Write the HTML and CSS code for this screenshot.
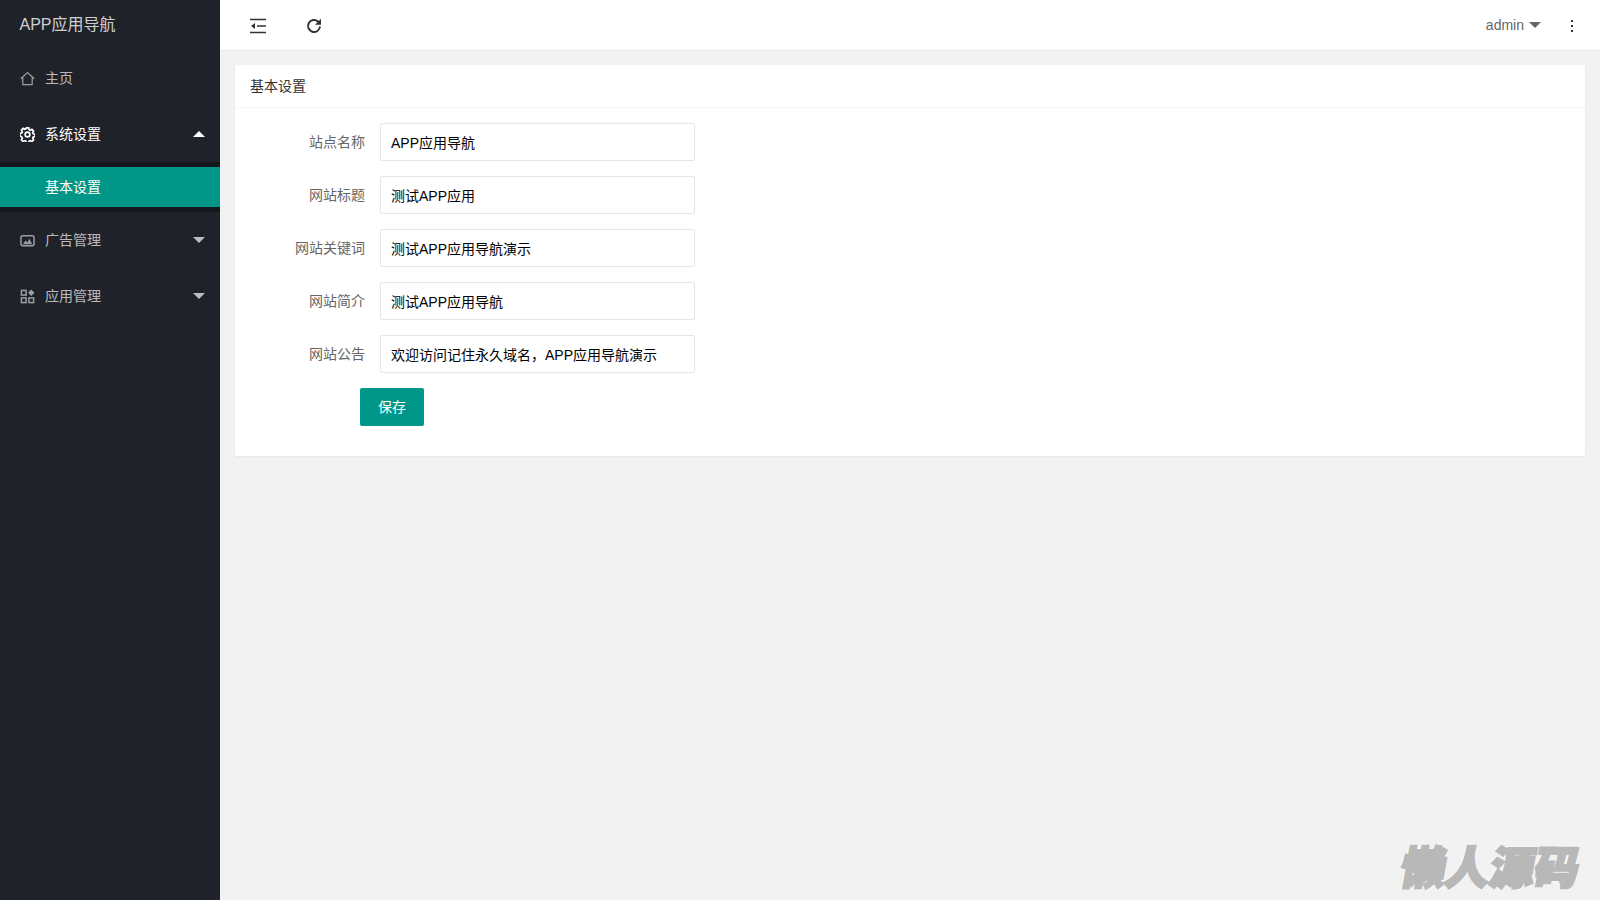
FILE: index.html
```html
<!DOCTYPE html>
<html lang="zh-CN">
<head>
<meta charset="utf-8">
<title>APP应用导航</title>
<link rel="stylesheet" href="styles.css">
</head>
<body>
<div class="app">
  <aside class="side">
    <div class="logo">APP应用导航</div>
    <nav class="menu">
      <a class="item">
        <svg class="ico" viewBox="0 0 16 16"><path d="M.8 8.200 8 1.600l7.200 6.600M3 6.500v8h10v-8"/></svg>
        <span class="label">主页</span>
      </a>
      <a class="item open">
        <svg class="ico gear" viewBox="0 0 16 16"><path d="M6.700 1h2.600l.4 1.900 1.300.6 1.700-1 1.800 1.800-1 1.700.6 1.300 1.900.4v2.600l-1.900.4-.6 1.300 1 1.700-1.800 1.800-1.700-1-1.300.6-.4 1.900H6.700l-.4-1.900-1.300-.6-1.700 1-1.800-1.800 1-1.700-.6-1.300L0 9.300V6.700l1.900-.4.6-1.300-1-1.700 1.800-1.800 1.700 1 1.300-.6z"/><circle cx="8" cy="8" r="2.500"/></svg>
        <span class="label">系统设置</span>
        <i class="caret up"></i>
      </a>
      <div class="sub"><a class="sub-item">基本设置</a></div>
      <a class="item">
        <svg class="ico thick" viewBox="0 0 16 16"><rect x="1" y="3" width="14" height="10.500" rx="2"/><path d="M3 12 6 8l2 2 2-4 3 6z" class="fill"/></svg>
        <span class="label">广告管理</span>
        <i class="caret"></i>
      </a>
      <a class="item">
        <svg class="ico thick" viewBox="0 0 16 16"><rect x="1.500" y="1.500" width="5" height="5"/><rect x="1.500" y="9.500" width="5" height="5"/><rect x="9.500" y="9.500" width="5" height="5"/><path class="fill" d="m12 .5 3.500 3.500L12 7.500 8.500 4z"/></svg>
        <span class="label">应用管理</span>
        <i class="caret"></i>
      </a>
    </nav>
  </aside>
  <div class="main">
    <header class="top">
      <div class="tools">
        <svg class="tool" viewBox="0 0 16 16"><path d="M0 1.500h16M7 8h9M0 14.500h16"/><path class="fill" d="M5 5v6L1 8z"/></svg>
        <svg class="tool" viewBox="0 0 16 16"><path class="thick-line" d="M14 8.500a6 6 0 1 1-2-5l2 2"/><path class="fill" d="M15 .8v6H9z"/></svg>
      </div>
      <div class="user">
        <span class="name">admin</span>
        <i class="caret dark"></i>
        <span class="dots"><b></b><b></b><b></b></span>
      </div>
    </header>
    <main class="body">
      <section class="card">
        <h2 class="card-title">基本设置</h2>
        <form class="form">
          <div class="row"><label class="form-label">站点名称</label><input class="input" value="APP应用导航"></div>
          <div class="row"><label class="form-label">网站标题</label><input class="input" value="测试APP应用"></div>
          <div class="row"><label class="form-label">网站关键词</label><input class="input" value="测试APP应用导航演示"></div>
          <div class="row"><label class="form-label">网站简介</label><input class="input" value="测试APP应用导航"></div>
          <div class="row"><label class="form-label">网站公告</label><input class="input" value="欢迎访问记住永久域名，APP应用导航演示"></div>
          <button class="btn" type="button">保存</button>
        </form>
      </section>
    </main>
  </div>
</div>
<div class="mark">懒人源码</div>
</body>
</html>
```
FILE: styles.css
```css
* { box-sizing: border-box; }
html, body { margin: 0; height: 100%; overflow: hidden; }
body {
  font: 14px/24px "Liberation Sans", "Noto Sans CJK SC", sans-serif;
  color: #333;
  background: #f2f2f2;
}
.app { display: flex; height: 900px; }
.side { width: 220px; flex: none; background: #20222a; color: rgba(255,255,255,.7); }
.logo { height: 50px; padding-left: 19.500px; font-size: 16px; line-height: 49px; color: rgba(255,255,255,.8); }
.menu { display: flex; flex-direction: column; }
.item { display: flex; align-items: center; height: 56px; padding: 0 15px 0 20px; }
.item .label { margin-left: 10px; flex: 1; }
.item.open { color: #fff; }
.ico { width: 15px; height: 15px; fill: none; stroke: currentColor; stroke-width: 1.300; opacity: .8; }
.open .ico { opacity: 1; }
.ico.gear { stroke-width: 1.800; }
.ico.thick { stroke-width: 1.600; }
.ico .fill { fill: currentColor; stroke: none; }
.caret { width: 0; height: 0; border: 6px solid transparent; border-top-color: rgba(255,255,255,.7); border-bottom-width: 0; }
.caret.up { border-top-width: 0; border-bottom: 6px solid #fff; }
.caret.dark { border-top-color: #666; }
.sub { padding: 5px 0; background: rgba(0,0,0,.3); }
.sub-item { display: block; height: 40px; padding-left: 45px; line-height: 40px; background: #009688; color: #fff; }
.main { flex: 1; min-width: 0; display: flex; flex-direction: column; }
.top { display: flex; justify-content: space-between; align-items: center; height: 51px; flex: none; padding: 1px 27px 0 30px; background: #fff; border-bottom: 1px solid #e8e8e8; }
.tools { display: flex; gap: 40px; align-items: center; }
.tool { width: 16px; height: 16px; fill: none; stroke: #333; stroke-width: 1.500; }
.tool .thick-line { stroke-width: 2; }
.tool .fill { fill: #333; stroke: none; }
.user { display: flex; align-items: center; color: #666; margin-top: -1px; }
.name { margin-right: 5px; }
.dots { display: flex; flex-direction: column; gap: 3px; margin-left: 30px; margin-top: 2px; }
.dots b { width: 2px; height: 2px; background: #333; }
.body { padding: 14px 15px 15px; }
.card { background: #fff; border-radius: 2px; box-shadow: 0 1px 2px rgba(0,0,0,.05); }
.card-title { margin: 0; height: 43px; padding: 0 15px; font-size: 14px; font-weight: 400; line-height: 42px; border-bottom: 1px solid #f6f6f6; }
.form { padding: 15px 0 30px; }
.row { display: flex; margin-bottom: 15px; }
.form-label { width: 145px; padding: 9px 15px 8px 0; text-align: right; color: #666; line-height: 20px; }
.input { width: 315px; height: 38px; padding: 0 10px; border: 1px solid #e6e6e6; border-radius: 2px; font: inherit; color: #000; background: #fff; outline: 0; }
.btn { display: block; width: 64px; height: 38px; margin-left: 125px; padding: 0; border: 0; border-radius: 2px; background: #009688; color: #fff; font: inherit; }
.mark { position: absolute; right: 20px; bottom: 5px; font: 900 44.500px/60px "Noto Sans CJK SC", sans-serif; color: #b8b8b8; -webkit-text-stroke: 2.500px #b8b8b8; text-shadow: 0 0 3px #fafafa, 2px 2px 1px #f8f8f8, -2px -2px 1px #f8f8f8; transform: skewX(-10deg); }
```
